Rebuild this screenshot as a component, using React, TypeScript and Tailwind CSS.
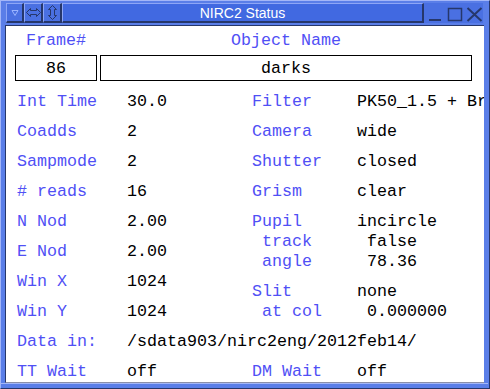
import React from "react";

const mono = { fontFamily: '"Liberation Mono", "DejaVu Sans Mono", monospace' };

type RowProps = { label: string; value: string; indent?: boolean; labelW: string };

const Row: React.FC<RowProps> = ({ label, value, indent, labelW }) => (
  <div className="flex h-5 items-center leading-5 whitespace-nowrap">
    <span className={`${labelW} shrink-0 text-[#5050f5] ${indent ? "pl-[10px]" : ""}`}>{label}</span>
    <span className={`text-black ${indent ? "pl-[10px]" : ""}`}>{value}</span>
  </div>
);

const Bevel: React.FC<{ className?: string; children?: React.ReactNode }> = ({ className, children }) => (
  <div
    className={`flex items-center justify-center h-full border-t border-l border-t-[#8ea6f6] border-l-[#8ea6f6] border-b-2 border-r-2 border-b-[#26376b] border-r-[#26376b] ${className ?? ""}`}
  >
    {children}
  </div>
);

const TitleBar: React.FC = () => (
  <div className="flex h-[20px] shrink-0 mx-[1px]">
    {/* window menu */}
    <Bevel className="w-[18px] bg-[#4a70e2]">
      <svg width="8" height="8" viewBox="0 0 8 8">
        <path d="M1 1.5 H7 L4 6.5 Z" fill="none" stroke="#9bb4ff" strokeWidth="1" />
      </svg>
    </Bevel>
    {/* horizontal maximize */}
    <Bevel className="w-[19px] bg-[#4a70e2]">
      <svg width="15" height="11" viewBox="0 0 15 11">
        <path
          d="M0.5 5.5 L4.5 1.5 V3.5 H10.5 V1.5 L14.5 5.5 L10.5 9.5 V7.5 H4.5 V9.5 Z"
          fill="none"
          stroke="#26376b"
          strokeWidth="1"
        />
      </svg>
    </Bevel>
    {/* vertical maximize */}
    <Bevel className="w-[19px] bg-[#4a70e2]">
      <svg width="11" height="15" viewBox="0 0 11 15">
        <path
          d="M5.5 0.5 L9.5 4.5 H7.5 V10.5 H9.5 L5.5 14.5 L1.5 10.5 H3.5 V4.5 H1.5 Z"
          fill="none"
          stroke="#26376b"
          strokeWidth="1"
        />
      </svg>
    </Bevel>
    {/* title */}
    <Bevel className="flex-1 bg-[#4169e1]">
      <span
        className="text-white text-[14px] leading-none pt-[1px]"
        style={{ fontFamily: '"Liberation Sans", Arial, sans-serif' }}
      >
        NIRC2 Status
      </span>
    </Bevel>
    {/* minimize / maximize / close */}
    <div className="flex items-end h-full bg-[#4a70e2] pl-[2px] pb-[1px] gap-[2px]">
      <svg width="18" height="16" viewBox="0 0 18 16">
        <rect x="3" y="13" width="12" height="2" fill="#26376b" />
      </svg>
      <svg width="18" height="16" viewBox="0 0 18 16">
        <rect x="2.5" y="2.5" width="13" height="12" fill="none" stroke="#26376b" strokeWidth="1.5" />
      </svg>
      <svg width="17" height="16" viewBox="0 0 17 16">
        <path d="M1.5 2 L15.5 15 M15.5 2 L1.5 15" stroke="#26376b" strokeWidth="2" />
      </svg>
    </div>
  </div>
);

const App: React.FC = () => {
  return (
    <div className="w-[490px] h-[389px] overflow-hidden bg-[#5a7ee8] border-t border-l border-t-[#a3b6f8] border-l-[#a3b6f8] border-r border-b border-r-[#26376b] border-b-[#26376b] pt-[2px] pl-[4px] pr-[5px] flex flex-col">
      <TitleBar />

      <div
        className="mt-[2px] h-[358px] shrink-0 bg-white border-l border-t border-b border-l-[#26376b] border-t-[#26376b] border-b-[#8a8fa8] pl-[11px] overflow-hidden text-[16.67px]"
        style={mono}
      >
        {/* header */}
        <div className="flex mt-[5px] -ml-[2px]">
          <div className="w-[82px] text-center text-[#5050f5] leading-5 h-5">Frame#</div>
          <div className="w-[372px] ml-[3px] text-center text-[#5050f5] leading-5 h-5">Object Name</div>
        </div>
        <div className="flex mt-[4px] -ml-[2px]">
          <div className="w-[82px] h-[26px] border border-black flex items-center justify-center">86</div>
          <div className="w-[372px] ml-[3px] h-[26px] border border-black flex items-center justify-center">
            darks
          </div>
        </div>

        {/* parameters */}
        <div className="flex mt-[11px]">
          <div className="w-[235px] shrink-0 flex flex-col gap-[10px]">
            <Row labelW="w-[110px]" label="Int Time" value="30.0" />
            <Row labelW="w-[110px]" label="Coadds" value="2" />
            <Row labelW="w-[110px]" label="Sampmode" value="2" />
            <Row labelW="w-[110px]" label="# reads" value="16" />
            <Row labelW="w-[110px]" label="N Nod" value="2.00" />
            <Row labelW="w-[110px]" label="E Nod" value="2.00" />
            <Row labelW="w-[110px]" label="Win X" value="1024" />
            <Row labelW="w-[110px]" label="Win Y" value="1024" />
          </div>
          <div className="flex-1 flex flex-col">
            <Row labelW="w-[105px]" label="Filter" value="PK50_1.5 + Brgamma" />
            <div className="mt-[10px]">
              <Row labelW="w-[105px]" label="Camera" value="wide" />
            </div>
            <div className="mt-[10px]">
              <Row labelW="w-[105px]" label="Shutter" value="closed" />
            </div>
            <div className="mt-[10px]">
              <Row labelW="w-[105px]" label="Grism" value="clear" />
            </div>
            <div className="mt-[10px]">
              <Row labelW="w-[105px]" label="Pupil" value="incircle" />
            </div>
            <Row labelW="w-[105px]" indent label="track" value="false" />
            <Row labelW="w-[105px]" indent label="angle" value="78.36" />
            <div className="mt-[10px]">
              <Row labelW="w-[105px]" label="Slit" value="none" />
            </div>
            <Row labelW="w-[105px]" indent label="at col" value="0.000000" />
          </div>
        </div>

        <div className="mt-[10px]">
          <Row labelW="w-[110px]" label="Data in:" value="/sdata903/nirc2eng/2012feb14/" />
        </div>
        <div className="flex mt-[10px]">
          <div className="w-[235px] shrink-0">
            <Row labelW="w-[110px]" label="TT Wait" value="off" />
          </div>
          <Row labelW="w-[105px]" label="DM Wait" value="off" />
        </div>
      </div>

      {/* bottom frame */}
      <div className="flex-1 border-t border-t-[#a3b6f8] -mx-[4px]" />
    </div>
  );
};

export default App;
